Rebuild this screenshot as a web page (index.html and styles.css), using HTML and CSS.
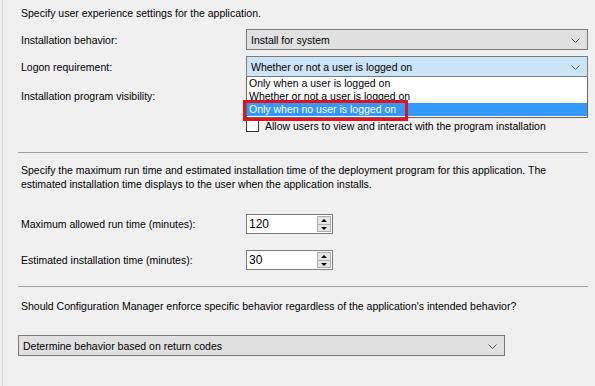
FILE: index.html
```html
<!DOCTYPE html>
<html lang="en">
<head>
  <meta charset="UTF-8" />
  <title>User Experience</title>
  <link rel="stylesheet" href="styles.css">
</head>
<body>
  <div class="panel">
    <p class="intro">Specify user experience settings for the application.</p>

    <div class="row">
      <label>Installation behavior:</label>
      <div class="combo">
        <span>Install for system</span>
        <svg class="chev" width="9" height="5" viewBox="0 0 9 5"><path d="M0.5 0.5 L4.5 4.5 L8.5 0.5" fill="none" stroke="#505050" stroke-width="1"/></svg>
      </div>
    </div>

    <div class="row">
      <label>Logon requirement:</label>
      <div class="combo focused">
        <span>Whether or not a user is logged on</span>
        <svg class="chev" width="9" height="5" viewBox="0 0 9 5"><path d="M0.5 0.5 L4.5 4.5 L8.5 0.5" fill="none" stroke="#505050" stroke-width="1"/></svg>
        <ul class="droplist">
          <li>Only when a user is logged on</li>
          <li>Whether or not a user is logged on</li>
          <li class="hl">Only when no user is logged on<span class="mark"></span></li>
        </ul>
      </div>
    </div>

    <div class="row row-vis">
      <label>Installation program visibility:</label>
      <div class="combo"></div>
    </div>

    <div class="check-row">
      <span class="checkbox"></span>
      <span>Allow users to view and interact with the program installation</span>
    </div>

    <hr class="sep">

    <p class="para">Specify the maximum run time and estimated installation time of the deployment program for this application. The<br>estimated installation time displays to the user when the application installs.</p>

    <div class="row row-num">
      <label>Maximum allowed run time (minutes):</label>
      <div class="spin">
        <span>120</span>
        <div class="spin-btns"><b class="up"></b><b class="down"></b></div>
      </div>
    </div>

    <div class="row row-num row-est">
      <label>Estimated installation time (minutes):</label>
      <div class="spin">
        <span>30</span>
        <div class="spin-btns"><b class="up"></b><b class="down"></b></div>
      </div>
    </div>

    <hr class="sep sep2">

    <p class="question">Should Configuration Manager enforce specific behavior regardless of the application's intended behavior?</p>

    <div class="combo wide">
      <span>Determine behavior based on return codes</span>
      <svg class="chev" width="9" height="5" viewBox="0 0 9 5"><path d="M0.5 0.5 L4.5 4.5 L8.5 0.5" fill="none" stroke="#505050" stroke-width="1"/></svg>
    </div>
  </div>
</body>
</html>
```

FILE: styles.css
```css
html, body {
  margin: 0;
  height: 100%;
  background: #f0f0f0;
}
body {
  font-family: "Liberation Sans", Arial, sans-serif;
  font-size: 10.5px;
  color: #000;
  overflow: hidden;
}
.panel {
  margin-left: 2px;
  min-height: 100%;
  border-left: 1px solid #dadada;
  padding: 0 7px 0 18px;
  box-sizing: border-box;
}
p { margin: 0; line-height: 14px; }
.intro { padding-top: 6px; }

.row {
  display: grid;
  grid-template-columns: 225px 342px;
  align-items: center;
  height: 21px;
  margin-top: 6px;
}
.intro + .row { margin-top: 9px; }
.row-vis { margin-top: 8px; }

.combo {
  position: relative;
  height: 21px;
  box-sizing: border-box;
  border: 1px solid #7a7a7a;
  background: #e1e1e1;
  display: flex;
  align-items: center;
  padding-left: 4px;
}
.combo.focused { background: #cce4f7; }
.combo .chev {
  position: absolute;
  right: 7px;
  top: 8px;
}
.droplist {
  position: absolute;
  top: 20px;
  left: -1px;
  right: -1px;
  margin: 0;
  padding: 0 0 1px;
  list-style: none;
  background: #fff;
  border: 1px solid #646464;
  border-top: none;
  z-index: 5;
}
.droplist li {
  position: relative;
  height: 13px;
  line-height: 13px;
  padding-left: 2px;
  white-space: nowrap;
}
.droplist li.hl { background: #3399ff; color: #fff; }
.droplist .mark {
  position: absolute;
  left: -4px;
  top: -3px;
  width: 165px;
  height: 21px;
  box-sizing: border-box;
  border: 3px solid #e3131e;
}

.check-row {
  display: flex;
  align-items: center;
  gap: 6px;
  margin: 13px 0 0 225px;
  height: 13px;
}
.checkbox {
  width: 13px;
  height: 13px;
  box-sizing: border-box;
  border: 1px solid #333;
  background: #fff;
}

.sep {
  margin: 20px 0 0 -3px;
  border: none;
  border-top: 1px solid #a0a0a0;
  height: 0;
}
.para { margin-top: 10px; white-space: nowrap; }

.row-num { grid-template-columns: 225px 87px; height: 20px; margin-top: 23px; }
.row-est { margin-top: 16px; }
.spin {
  position: relative;
  height: 20px;
  box-sizing: border-box;
  border: 1px solid #7a7a7a;
  background: #fff;
  display: flex;
  align-items: center;
  padding-left: 2px;
  font-size: 12px;
}
.spin-btns {
  position: absolute;
  right: 1px;
  top: 1px;
  width: 14px;
  height: 16px;
  display: flex;
  flex-direction: column;
  border: 1px solid #adadad;
  box-sizing: border-box;
  background: #e5e5e5;
}
.spin-btns b {
  flex: 1;
  position: relative;
}
.spin-btns .up { border-bottom: 1px solid #adadad; }
.spin-btns b::after {
  content: "";
  position: absolute;
  left: 3px;
  top: 2px;
  border-left: 3px solid transparent;
  border-right: 3px solid transparent;
}
.spin-btns .up::after { border-bottom: 3px solid #000; }
.spin-btns .down::after { border-top: 3px solid #000; }

.sep2 { margin-top: 16px; }
.question { margin-top: 12px; }
.combo.wide {
  width: 487px;
  margin: 22px 0 0 -3px;
}
```
